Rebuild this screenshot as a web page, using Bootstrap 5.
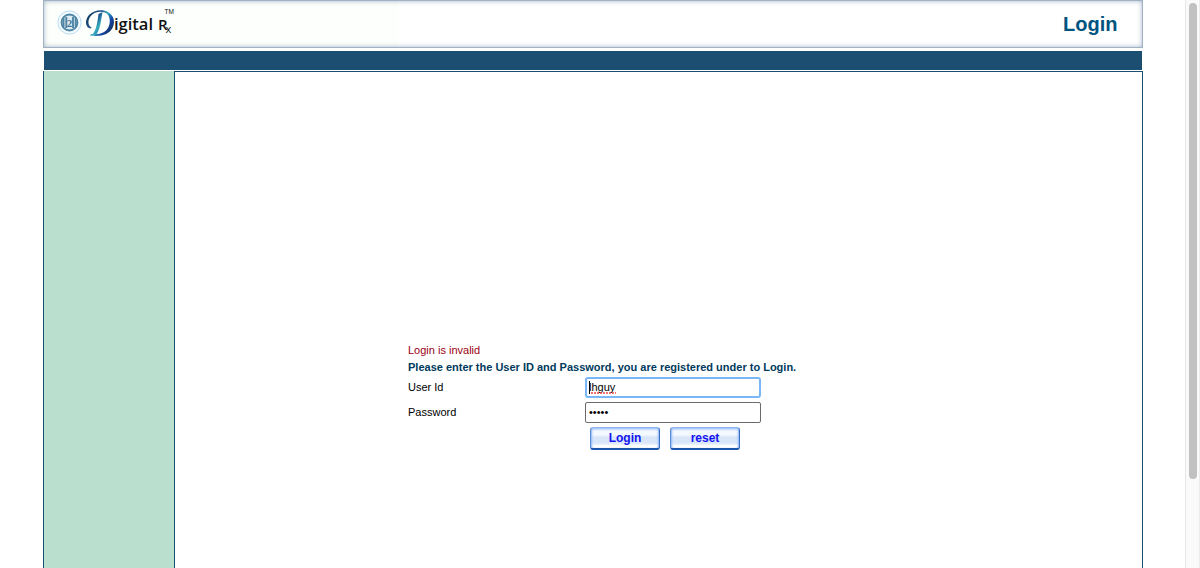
<!DOCTYPE html>
<html lang="en">
<head>
<meta charset="utf-8">
<meta name="viewport" content="width=device-width, initial-scale=1">
<title>Digital Rx - Login</title>
<link href="https://cdn.jsdelivr.net/npm/bootstrap@5.3.0/dist/css/bootstrap.min.css" rel="stylesheet">
<style>
html,body{height:100%;overflow:hidden}
body{font:11px/17px "Liberation Sans",Arial,sans-serif;color:#000;background:#fff}
.page{width:1100px;margin-left:43px}
.masthead{height:48px;background:linear-gradient(90deg,#fcfffb 355px,#fff 355px);box-shadow:inset 0 0 0 1px #a0b1c6,inset 0 0 5px 1px #a5b5c8}
.title{font-size:20px;font-weight:700;line-height:24px;color:#005480;padding-right:25.5px}
.strip{height:19px;margin:3px 1px 1px;background:#1b4e71}
.side{width:131px;background:#bbdfce;border-left:1px solid #1b4e71}
.main{border:1px solid #1b4e71;border-bottom:0}
.login-form{margin:270px 0 0 233px;width:390px}
.err{color:#990010}
.lead-in{font-weight:700;color:#003a5c;white-space:nowrap;margin-bottom:1px}
.field-label{width:177px}
.form-control.entry{width:176px;height:21px;padding:0 3px 2px;border:1px solid #6b6b6b;border-radius:2px;font-size:11px;line-height:17px;color:#000;box-shadow:none;background:#fff}
.form-control.entry.active{border:2px solid #7ab7f8;border-radius:3px;padding:0 2px 2px}
.caret{width:1px;height:13px;background:#000;left:4px;top:4px}
.squiggle{left:6px;top:15px}
.buttons{margin:4px 0 0 182px;gap:10px}
.btn.glass{width:70px;height:23px;padding:0;border:1px solid #8db4f0;border-bottom:2px solid #1c56ac;border-right-color:#3a6fc8;border-left-color:#5b8cd8;border-radius:3px;font-size:12px;line-height:20px;font-weight:700;color:#1414f0;background:linear-gradient(#a4c6f8 0,#f4f8ff 3px,#f4f8ff 7px,#d9e6f9 9px,#d9e6f9 15px,#fff 18px);box-shadow:inset 2px 0 2px -1px #8fb6f2,inset -2px 0 2px -1px #8fb6f2}
.scroll-track{width:15px;height:568px;background:#fafafa;border-left:1px solid #e8e8e8;border-right:1px solid #ececec}
.scroll-thumb{width:8px;height:476px;margin:3px 0 0 3px;border-radius:4px;background:#c1c1c1}
</style>
</head>
<body>
<div class="d-flex h-100 justify-content-between">
<div class="page d-flex flex-column flex-shrink-0">
<header class="masthead d-flex justify-content-between align-items-center flex-shrink-0">
<svg width="150" height="48" viewBox="43 0 150 48" role="img" aria-label="Digital Rx">
<defs><linearGradient id="ink" gradientUnits="userSpaceOnUse" x1="88" y1="14" x2="114" y2="32"><stop offset="0" stop-color="#0d3a58"/><stop offset=".3" stop-color="#1d4f90"/><stop offset=".5" stop-color="#35b0bd"/><stop offset=".7" stop-color="#1747a8"/><stop offset="1" stop-color="#0b2740"/></linearGradient></defs>
<circle cx="69.5" cy="22.500" r="11.600" fill="#f4fbff" stroke="#b9dcf5" stroke-width="1"/>
<circle cx="69.5" cy="22.500" r="8" fill="#dcebf2" stroke="#4f85a4" stroke-width="1.800"/>
<path d="M63.500 17.500V27.500M66.300 17V28M73 17V28M75.700 17.500V27.500" stroke="#4f85a4" stroke-width="1.900"/>
<text x="69.600" y="26.500" text-anchor="middle" font-family="Liberation Serif, serif" font-size="11" font-weight="700" fill="#3f7695">2</text>
<g fill="url(#ink)">
<path d="M91 28.500C85 28 84.500 20 89 15C94 9.500 103 9 108 12C114 15.500 115.500 22 112.500 28C109 34.500 101 37 90 35.500L91 34C101 35 106 32 108.500 27C111 21.500 110 15 105 12.500C100 10.500 93 12 90 17C87.500 21 88 26 91.500 27.300Z"/>
<path d="M98.500 14L102.500 12C101 20 100.500 29 96 34.800L92.500 34.500C97 29 97.500 21 98.500 14Z"/>
</g>
<text x="114" y="30" font-family="Open Sans, sans-serif" font-size="16" font-weight="600" fill="#111" textLength="39" lengthAdjust="spacingAndGlyphs">igital</text>
<text x="158" y="30" font-family="Open Sans, sans-serif" font-size="15" font-weight="600" fill="#111">R<tspan x="165.500" y="33" font-size="11" font-weight="400">x</tspan></text>
<text x="164.500" y="14" font-family="Liberation Sans, sans-serif" font-size="6.500" fill="#111">TM</text>
</svg>
<div class="title">Login</div>
</header>
<div class="strip flex-shrink-0"></div>
<div class="d-flex flex-grow-1">
<aside class="side flex-shrink-0"></aside>
<main class="main flex-grow-1">
<form class="login-form">
<div class="err">Login is invalid</div>
<div class="lead-in">Please enter the User ID and Password, you are registered under to Login.</div>
<div class="d-flex align-items-center mb-1"><label class="field-label" for="uid">User Id</label>
<div class="position-relative"><input id="uid" class="form-control entry active" type="text" value="lhguy" spellcheck="false"><span class="caret position-absolute"></span>
<svg class="squiggle position-absolute" width="26" height="2"><path d="M0 1H25" stroke="#f04444" stroke-width="1.300" stroke-dasharray="2 1"/></svg></div></div>
<div class="d-flex align-items-center"><label class="field-label" for="pwd">Password</label><input id="pwd" class="form-control entry" type="password" value="12345"></div>
<div class="d-flex buttons"><button type="button" class="btn glass">Login</button><button type="button" class="btn glass">reset</button></div>
</form>
</main>
</div>
</div>
<div class="scroll-track flex-shrink-0"><div class="scroll-thumb"></div></div>
</div>
<script src="https://cdn.jsdelivr.net/npm/bootstrap@5.3.0/dist/js/bootstrap.bundle.min.js"></script>
</body>
</html>
